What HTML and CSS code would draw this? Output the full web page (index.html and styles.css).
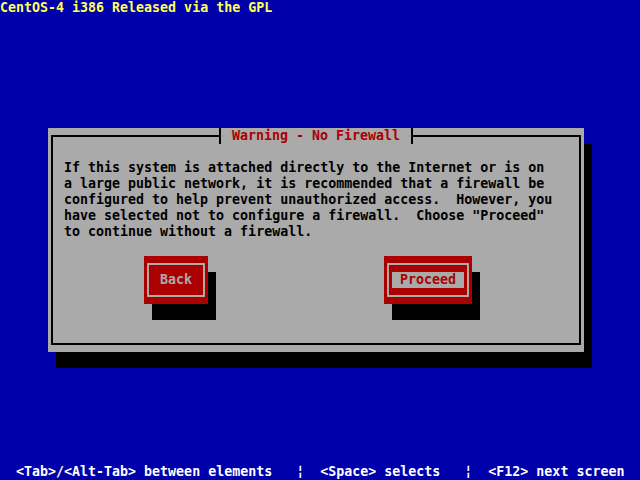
FILE: index.html
```html
<!DOCTYPE html>
<html lang="en">
<head>
<meta charset="UTF-8">
<title>CentOS-4 Installer</title>
<link rel="stylesheet" href="styles.css">
</head>
<body>

<div class="top-line">CentOS-4 i386 Released via the GPL</div>

<div class="dialog">
  <div class="dialog-title">Warning - No Firewall</div>
  <div class="frame">
    <p class="message">If this system is attached directly to the Internet or is on
a large public network, it is recommended that a firewall be
configured to help prevent unauthorized access.  However, you
have selected not to configure a firewall.  Choose "Proceed"
to continue without a firewall.</p>
    <div class="buttons">
      <div class="btn btn-back"><span class="btn-inner"><span class="btn-label">Back</span></span></div>
      <div class="btn btn-proceed focus"><span class="btn-inner"><span class="btn-label">Proceed</span></span></div>
    </div>
  </div>
</div>

<div class="help-line">  &lt;Tab&gt;/&lt;Alt-Tab&gt; between elements   ¦  &lt;Space&gt; selects   ¦  &lt;F12&gt; next screen</div>

</body>
</html>
```

FILE: styles.css
```css
body {
  margin: 0;
  width: 640px;
  height: 480px;
  background: #0000aa;
  display: flex;
  flex-direction: column;
  font-family: "DejaVu Sans Mono", "Liberation Mono", monospace;
  font-weight: bold;
  font-size: 13.3px;
  line-height: 16px;
  overflow: hidden;
}

.top-line {
  height: 16px;
  color: #ffff55;
  white-space: pre;
}

/* main dialog window */
.dialog {
  position: relative;
  margin: 112px 0 0 48px;
  width: 536px;
  height: 224px;
  padding: 7px 3px;
  box-sizing: border-box;
  background: #aaaaaa;
  box-shadow: 8px 16px 0 #000;
}

.frame {
  height: 100%;
  box-sizing: border-box;
  border: 2px solid #000;
  padding: 23px 0 0 11px;
}

.dialog-title {
  position: absolute;
  top: 0;
  left: 171px;
  width: 194px;
  height: 16px;
  box-sizing: border-box;
  border-left: 2px solid #000;
  border-right: 2px solid #000;
  background: #aaaaaa;
  color: #aa0000;
  text-align: center;
  white-space: pre;
}

.message {
  margin: 0;
  color: #000;
  white-space: pre;
}

.buttons {
  display: flex;
  gap: 176px;
  margin-top: 16px;
  padding-left: 80px;
}

.btn {
  height: 48px;
  padding: 7px 3px;
  box-sizing: border-box;
  background: #aa0000;
  box-shadow: 8px 16px 0 #000;
}

.btn-back { width: 64px; }
.btn-proceed { width: 88px; }

.btn-inner {
  display: flex;
  height: 100%;
  box-sizing: border-box;
  border: 2px solid #aaaaaa;
  align-items: center;
  justify-content: center;
}

.btn-label {
  color: #aaaaaa;
  padding: 0 8px;
  white-space: pre;
}

.btn.focus .btn-label {
  background: #aaaaaa;
  color: #aa0000;
}

.help-line {
  margin-top: auto;
  height: 16px;
  color: #ffffff;
  white-space: pre;
}
```
